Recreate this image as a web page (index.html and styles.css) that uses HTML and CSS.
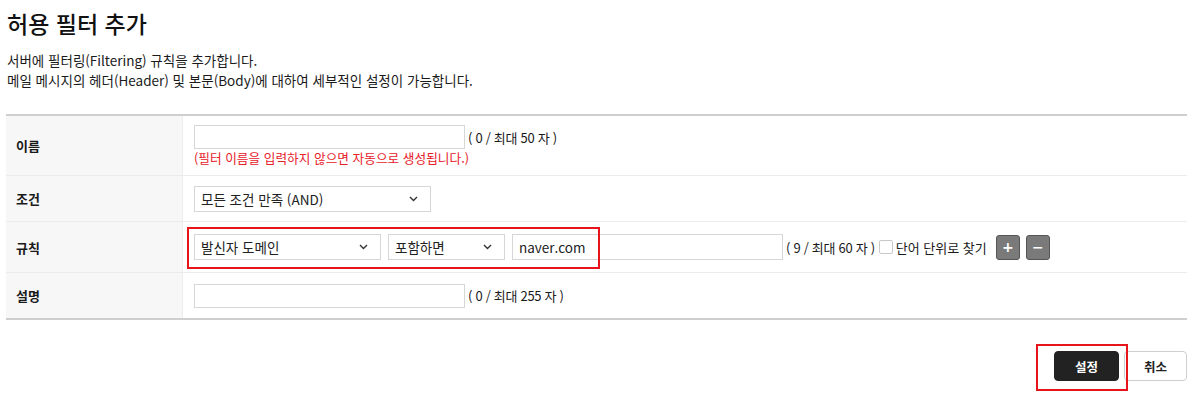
FILE: index.html
```html
<!DOCTYPE html>
<html lang="ko">
<head>
    <meta charset="UTF-8">
    <meta content="width=device-width, initial-scale=1.0" name="viewport">
    <link rel="stylesheet" href="styles.css">
    <title>허용 필터 추가</title>
</head>
<body>

<div class="page">
    <h1 class="title">허용 필터 추가</h1>
    <p class="desc">
        서버에 필터링(Filtering) 규칙을 추가합니다.<br>
        메일 메시지의 헤더(Header) 및 본문(Body)에 대하여 세부적인 설정이 가능합니다.
    </p>

    <div class="form-table">
        <!-- 이름 -->
        <div class="row row-name">
            <div class="label">이름</div>
            <div class="value stack">
                <div class="line">
                    <input class="text w-271" type="text">
                    <span class="count">( 0 / 최대 50 자 )</span>
                </div>
                <div class="note">(필터 이름을 입력하지 않으면 자동으로 생성됩니다.)</div>
            </div>
        </div>

        <!-- 조건 -->
        <div class="row row-cond">
            <div class="label">조건</div>
            <div class="value">
                <div class="select w-237">
                    <span>모든 조건 만족 (AND)</span>
                    <svg class="chev" width="9" height="6" viewBox="0 0 9 6"><path d="M1 1l3.5 3.5L8 1" fill="none" stroke="#333" stroke-width="1.4"/></svg>
                </div>
            </div>
        </div>

        <!-- 규칙 -->
        <div class="row row-rule">
            <div class="label">규칙</div>
            <div class="value rule">
                <div class="select w-187">
                    <span>발신자 도메인</span>
                    <svg class="chev" width="9" height="6" viewBox="0 0 9 6"><path d="M1 1l3.5 3.5L8 1" fill="none" stroke="#333" stroke-width="1.4"/></svg>
                </div>
                <div class="select w-117">
                    <span>포함하면</span>
                    <svg class="chev" width="9" height="6" viewBox="0 0 9 6"><path d="M1 1l3.5 3.5L8 1" fill="none" stroke="#333" stroke-width="1.4"/></svg>
                </div>
                <input class="text w-271 tall" type="text" value="naver.com">
                <span class="count">( 9 / 최대 60 자 )</span>
                <label class="check"><span class="box"></span>단어 단위로 찾기</label>
                <div class="icon-btns">
                    <button class="sq-btn" type="button">+</button>
                    <button class="sq-btn" type="button">&minus;</button>
                </div>
                <div class="mark mark-rule"></div>
            </div>
        </div>

        <!-- 설명 -->
        <div class="row row-desc">
            <div class="label">설명</div>
            <div class="value">
                <input class="text w-271" type="text">
                <span class="count">( 0 / 최대 255 자 )</span>
            </div>
        </div>
    </div>

    <div class="actions">
        <button class="btn btn-dark" type="button">설정</button>
        <button class="btn" type="button">취소</button>
        <div class="mark mark-save"></div>
    </div>
</div>

</body>
</html>
```

FILE: styles.css
```css
body {
    margin: 0;
    background: #fff;
    color: #222;
    font-family: "Noto Sans CJK KR", "Noto Sans", sans-serif;
}

.page {
    width: 1181px;
    margin-left: 6px;
    padding-bottom: 20px;
}

.title {
    margin: 0;
    padding: 8px 0 0 1px;
    font-size: 23px;
    line-height: 30px;
    font-weight: 500;
    color: #111;
}

.desc {
    margin: 12px 0 0 1px;
    font-size: 13.5px;
    line-height: 20px;
    color: #1a1a1a;
}

/* form table */
.form-table {
    margin-top: 24px;
    border-top: 2px solid #cfcfcf;
    border-bottom: 2px solid #cfcfcf;
}

.row {
    display: grid;
    grid-template-columns: 177px 1fr;
    border-top: 1px solid #ececec;
}

.row:first-child {
    border-top: 0;
}

.row-name { height: 59px; }
.row-cond { height: 45px; }
.row-rule { height: 50px; }
.row-desc { height: 45px; }

.label {
    display: flex;
    align-items: center;
    padding-left: 10px;
    background: #f7f7f7;
    border-right: 1px solid #ececec;
    font-size: 13px;
    font-weight: 700;
    color: #1a1a1a;
}

.value {
    display: flex;
    align-items: center;
    padding-left: 11px;
    position: relative;
}

.value.stack {
    flex-direction: column;
    align-items: flex-start;
    justify-content: flex-start;
    padding-top: 9px;
}

.line {
    display: flex;
    align-items: center;
}

.note {
    margin-top: 1px;
    font-size: 12.7px;
    line-height: 16px;
    color: #e8202a;
}

.text {
    box-sizing: border-box;
    height: 24px;
    margin: 0;
    padding: 0 6px;
    border: 1px solid #d6d6d6;
    background: #fff;
    font-family: inherit;
    font-size: 13.5px;
    color: #222;
    outline: none;
}

.text.tall {
    height: 26px;
}

.w-271 { width: 271px; }
.w-237 { width: 237px; }
.w-187 { width: 187px; }
.w-117 { width: 117px; }

.count {
    margin-left: 3px;
    font-size: 13px;
    letter-spacing: -0.3px;
    color: #1a1a1a;
}

.select {
    box-sizing: border-box;
    height: 26px;
    display: flex;
    align-items: center;
    justify-content: space-between;
    padding: 0 12px 0 6px;
    border: 1px solid #d6d6d6;
    background: #fff;
    font-size: 13.5px;
    color: #222;
}

.chev {
    display: block;
}

.rule .select + .select,
.rule .select + .text {
    margin-left: 7px;
}

.check {
    display: flex;
    align-items: center;
    margin-left: 4px;
    font-size: 13px;
    color: #1a1a1a;
}

.box {
    width: 14px;
    height: 14px;
    box-sizing: border-box;
    border: 1px solid #c8c8c8;
    border-radius: 2px;
    background: #fff;
    margin-right: 3px;
}

.icon-btns {
    display: flex;
    gap: 6px;
    margin-left: 9px;
}

.sq-btn {
    width: 24px;
    height: 25px;
    padding: 0;
    border: 1px solid #555;
    border-radius: 3px;
    background: #7a7a7a;
    color: #fff;
    font-family: "DejaVu Sans", sans-serif;
    font-size: 14px;
    font-weight: 700;
    line-height: 22px;
}

/* buttons */
.actions {
    position: relative;
    display: flex;
    justify-content: flex-end;
    align-items: flex-start;
    gap: 5px;
    height: 40px;
    margin-top: 31px;
}

.btn {
    box-sizing: border-box;
    width: 63px;
    height: 30px;
    padding: 0;
    border: 1px solid #cfcfcf;
    border-radius: 4px;
    background: #fff;
    font-family: inherit;
    font-size: 12.5px;
    font-weight: 700;
    color: #222;
}

.btn-dark {
    width: 65px;
    border-color: #222;
    background: #222;
    color: #fff;
}

/* red highlight marks */
.mark {
    position: absolute;
    box-sizing: border-box;
    border: 2px solid #e8141c;
    pointer-events: none;
}

.mark-rule {
    left: 4px;
    top: 5px;
    width: 413px;
    height: 42px;
}

.mark-save {
    right: 59px;
    top: -7px;
    width: 92px;
    height: 47px;
}
```
